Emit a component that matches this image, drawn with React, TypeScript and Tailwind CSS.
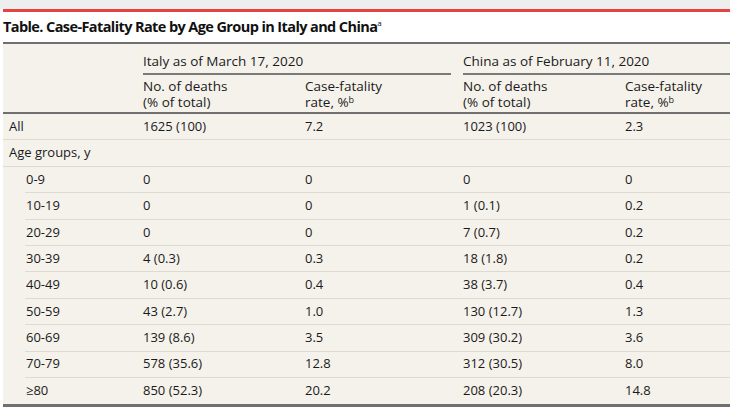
const COLS = "grid-cols-[140px_162px_158px_162px_1fr]";
const COLS_INDENT = "grid-cols-[118px_162px_158px_162px_1fr]";

type RowData = {
  label: string;
  cells: string[];
  indent?: boolean;
};

const rows: RowData[] = [
  { label: "All", cells: ["1625 (100)", "7.2", "1023 (100)", "2.3"] },
  { label: "Age groups, y", cells: ["", "", "", ""] },
  { label: "0-9", cells: ["0", "0", "0", "0"], indent: true },
  { label: "10-19", cells: ["0", "0", "1 (0.1)", "0.2"], indent: true },
  { label: "20-29", cells: ["0", "0", "7 (0.7)", "0.2"], indent: true },
  { label: "30-39", cells: ["4 (0.3)", "0.3", "18 (1.8)", "0.2"], indent: true },
  { label: "40-49", cells: ["10 (0.6)", "0.4", "38 (3.7)", "0.4"], indent: true },
  { label: "50-59", cells: ["43 (2.7)", "1.0", "130 (12.7)", "1.3"], indent: true },
  { label: "60-69", cells: ["139 (8.6)", "3.5", "309 (30.2)", "3.6"], indent: true },
  { label: "70-79", cells: ["578 (35.6)", "12.8", "312 (30.5)", "8.0"], indent: true },
  { label: "≥80", cells: ["850 (52.3)", "20.2", "208 (20.3)", "14.8"], indent: true },
];

const Row = ({ row, last }: { row: RowData; last: boolean }) => {
  return (
    <div className={row.indent ? "pl-[22px]" : ""}>
      <div
        className={`grid h-[26.4px] items-center ${row.indent ? COLS_INDENT : COLS} ${
          last ? "" : "border-b border-[#dedad1]"
        }`}
      >
        <span className={row.indent ? "pl-[1px]" : "pl-[6px]"}>{row.label}</span>
        {row.cells.map((c, i) => (
          <span key={i}>{c}</span>
        ))}
      </div>
    </div>
  );
};

export default function App() {
  return (
    <div className="w-[730px] h-[409px] overflow-hidden bg-white font-['Open_Sans','Liberation_Sans',sans-serif] text-[#1a1a1a]">
      {/* top band + red rule */}
      <div className="h-[9px] bg-[#eeeeee]" />
      <div className="ml-[3px] h-[3px] bg-[#e5433f]" />

      {/* title */}
      <div className="flex h-[30px] items-center pl-[3px] text-[14.5px] font-bold tracking-[-0.6px] text-[#111]">
        Table. Case-Fatality Rate by Age Group in Italy and China
        <sup className="text-[8px] font-normal">a</sup>
      </div>

      {/* table */}
      <div className="ml-[3px] border-t-2 border-b-[3px] border-[#707070] bg-[#f5f2ec] text-[13px]">
        {/* group headers */}
        <div className={`grid ${COLS} text-[13.5px]`}>
          <div />
          <div className="col-span-2 pr-[12px]">
            <div className="border-b-2 border-[#7a7a7a] pt-[9px] pb-[4px] leading-[16px]">
              Italy as of March 17, 2020
            </div>
          </div>
          <div className="col-span-2">
            <div className="border-b-2 border-[#7a7a7a] pt-[9px] pb-[4px] leading-[16px]">
              China as of February 11, 2020
            </div>
          </div>
        </div>

        {/* column headers */}
        <div className={`grid ${COLS} border-b-2 border-[#707070] pt-[3px] pb-[2px] text-[13.5px] leading-[16px]`}>
          <div />
          <div>
            No. of deaths
            <br />
            (% of total)
          </div>
          <div>
            Case-fatality
            <br />
            rate, %<sup className="text-[9px]">b</sup>
          </div>
          <div>
            No. of deaths
            <br />
            (% of total)
          </div>
          <div>
            Case-fatality
            <br />
            rate, %<sup className="text-[9px]">b</sup>
          </div>
        </div>

        {/* body */}
        {rows.map((r, i) => (
          <Row key={r.label} row={r} last={i === rows.length - 1} />
        ))}
      </div>
    </div>
  );
}
